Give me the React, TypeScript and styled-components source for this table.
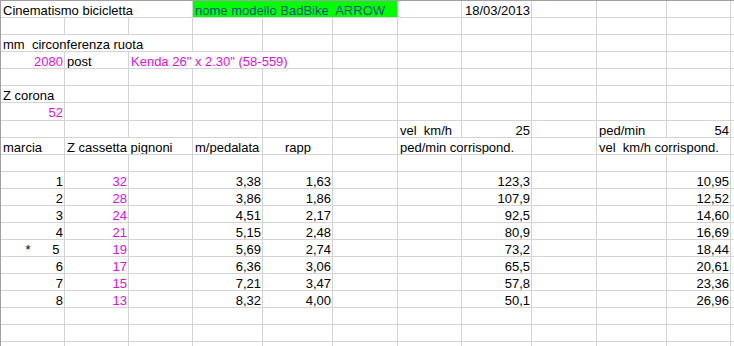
import React from 'react';
import styled, { createGlobalStyle } from 'styled-components';

const GlobalStyle = createGlobalStyle`
  html, body {
    margin: 0;
    padding: 0;
    background: #ffffff;
    overflow: hidden;
  }
  body {
    font-family: "Liberation Sans", Arial, sans-serif;
    font-size: 13px;
  }
`;

const COLS = [64, 64, 64, 70, 70, 65, 64, 70, 65, 70, 64, 64];
const ROWS = [17, 17, 17, 17, 17, 17, 18, 17, 17, 17, 17, 17, 17, 17, 17, 17, 17, 17, 17, 17, 17];

const MAGENTA = '#dd11dd';
const NAVY = '#104a8e';
const GREEN = '#00ff00';

const Sheet = styled.div`
  display: grid;
  grid-template-columns: ${COLS.map((c) => `${c}px`).join(' ')};
  grid-template-rows: ${ROWS.map((r) => `${r}px`).join(' ')};
  width: max-content;
  border-top: 1px solid #a0a0a0;
  border-left: 1px solid #a0a0a0;
`;

type Align = 'left' | 'right' | 'center';

const Cell = styled.div<{ $align?: Align; $color?: string; $span?: number; $bg?: string }>`
  grid-column: span ${(p) => p.$span ?? 1};
  box-sizing: border-box;
  border-right: 1px solid #d4d4d4;
  border-bottom: 1px solid #d4d4d4;
  padding: 2px 1px 0 2px;
  line-height: 15px;
  white-space: pre;
  overflow: hidden;
  text-align: ${(p) => p.$align ?? 'left'};
  color: ${(p) => p.$color ?? '#000000'};
  background: ${(p) => p.$bg ?? 'transparent'};
`;

type CellSpec = { t?: string; span?: number; align?: Align; color?: string; bg?: string };

const E: CellSpec = {};

const gears: [string, string, string, string, string, string][] = [
  ['1', '32', '3,38', '1,63', '123,3', '10,95'],
  ['2', '28', '3,86', '1,86', '107,9', '12,52'],
  ['3', '24', '4,51', '2,17', '92,5', '14,60'],
  ['4', '21', '5,15', '2,48', '80,9', '16,69'],
  ['*      5 ', '19', '5,69', '2,74', '73,2', '18,44'],
  ['6', '17', '6,36', '3,06', '65,5', '20,61'],
  ['7', '15', '7,21', '3,47', '57,8', '23,36'],
  ['8', '13', '8,32', '4,00', '50,1', '26,96'],
];

const fill = (cells: CellSpec[]): CellSpec[] => {
  const used = cells.reduce((n, c) => n + (c.span ?? 1), 0);
  const rest: CellSpec[] = [];
  for (let i = used; i < COLS.length; i++) rest.push(E);
  return [...cells, ...rest];
};

const rows: CellSpec[][] = [
  fill([
    { t: 'Cinematismo bicicletta', span: 3 },
    { t: 'nome modello BadBike  ARROW', span: 3, color: NAVY, bg: GREEN },
    E,
    { t: '18/03/2013', align: 'right' },
  ]),
  fill([]),
  fill([{ t: 'mm  circonferenza ruota', span: 3 }]),
  fill([
    { t: '2080', align: 'right', color: MAGENTA },
    { t: 'post' },
    { t: 'Kenda 26" x 2.30" (58-559)', span: 3, color: MAGENTA },
  ]),
  fill([]),
  fill([{ t: 'Z corona' }]),
  fill([{ t: '52', align: 'right', color: MAGENTA }]),
  fill([
    E, E, E, E, E, E,
    { t: 'vel  km/h' },
    { t: '25', align: 'right' },
    E,
    { t: 'ped/min' },
    { t: '54', align: 'right' },
  ]),
  fill([
    { t: 'marcia' },
    { t: 'Z cassetta pignoni', span: 2 },
    { t: 'm/pedalata' },
    { t: 'rapp', align: 'center' },
    E,
    { t: 'ped/min corrispond.', span: 2 },
    E,
    { t: 'vel  km/h corrispond.', span: 2 },
  ]),
  fill([]),
  ...gears.map(([g, z, m, r, p, v]) =>
    fill([
      { t: g, align: 'right' },
      { t: z, align: 'right', color: MAGENTA },
      E,
      { t: m, align: 'right' },
      { t: r, align: 'right' },
      E,
      E,
      { t: p, align: 'right' },
      E,
      E,
      { t: v, align: 'right' },
    ])
  ),
  fill([]),
  fill([]),
  fill([]),
];

export default function App() {
  return (
    <>
      <GlobalStyle />
      <Sheet>
        {rows.map((row, ri) =>
          row.map((c, ci) => (
            <Cell
              key={`${ri}-${ci}`}
              $span={c.span}
              $align={c.align}
              $color={c.color}
              $bg={c.bg}
            >
              {c.t ?? ''}
            </Cell>
          ))
        )}
      </Sheet>
    </>
  );
}
